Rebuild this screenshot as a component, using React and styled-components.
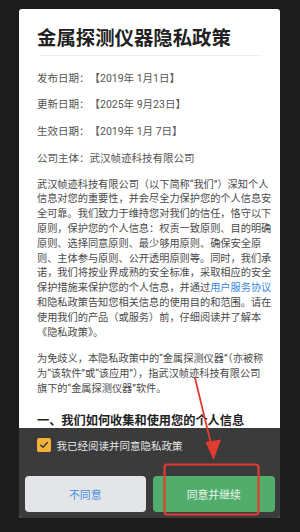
import React from "react";
import styled, { createGlobalStyle } from "styled-components";

const Global = createGlobalStyle`
  html, body { margin: 0; padding: 0; background: #1c1c1c; }
  body { font-family: Roboto, "Noto Sans CJK SC", sans-serif; }
`;

const Page = styled.div`
  position: relative;
  width: 300px;
  height: 532px;
  background: #1c1c1c;
  padding: 9px 20px 0 19px;
  box-sizing: border-box;
  overflow: hidden;
`;

const Card = styled.div`
  width: 261px;
  height: 509px;
  background: #ffffff;
  border-radius: 3px;
  display: flex;
  flex-direction: column;
  overflow: hidden;
`;

const Content = styled.div`
  flex: 1;
  min-height: 0;
  overflow: hidden;
  padding: 16.5px 18px 0 18px;
  color: #4a4a4a;
  font-size: 10.2px;
  line-height: 14.8px;
`;

const Title = styled.h1`
  margin: 0;
  font-size: 19.4px;
  line-height: 26px;
  font-weight: 700;
  color: #222;
  letter-spacing: 0;
`;

const Divider = styled.div`
  height: 1px;
  background: #eeeeee;
  margin: 3.5px 0 14.5px 2px;
`;

const Meta = styled.p`
  margin: 0 0 11.7px 0;
  font-size: 10.5px;
  line-height: 15px;
  color: #555;
  white-space: nowrap;
  text-spacing-trim: space-all;
`;

const Para = styled.p`
  margin: 12px 0 0 0;
  white-space: nowrap;
`;

const Link = styled.span`
  color: #3a86e0;
`;

const Heading = styled.h2`
  margin: 16.5px 0 0 0;
  font-size: 12.2px;
  line-height: 16px;
  font-weight: 700;
  color: #222;
  white-space: nowrap;
`;

const Footer = styled.div`
  flex: 0 0 90px;
  background: #3b3b3b;
  padding: 10px 5.5px 6px;
  box-sizing: border-box;
  display: flex;
  flex-direction: column;
`;

const CheckRow = styled.label`
  display: flex;
  align-items: center;
  gap: 6px;
  margin-left: 12.5px;
  height: 14px;
  color: #e6e6e6;
  font-size: 10.5px;
`;

const Box = styled.span`
  width: 13.5px;
  height: 13.5px;
  border-radius: 2px;
  background: #f1b13b;
  display: flex;
  align-items: center;
  justify-content: center;
`;

const Buttons = styled.div`
  margin-top: 24px;
  display: grid;
  grid-template-columns: 1fr 1fr;
  gap: 7px;
`;

const Btn = styled.button`
  height: 36px;
  border: none;
  border-radius: 4px;
  font-family: inherit;
  font-size: 10.8px;
  background: ${(p) => (p.$primary ? "#52ad6c" : "#e4e5e8")};
  color: ${(p) => (p.$primary ? "#e9f5ec" : "#4a8fe0")};
  padding: 0;
`;

const Overlay = styled.svg`
  position: absolute;
  left: 0;
  top: 0;
  pointer-events: none;
`;

export default function App() {
  return (
    <Page>
      <Global />
      <Card>
        <Content>
          <Title>金属探测仪器隐私政策</Title>
          <Divider />
          <Meta>发布日期：【2019年 1月1日】</Meta>
          <Meta>更新日期：【2025年 9月23日】</Meta>
          <Meta>生效日期：【2019年 1月 7日】</Meta>
          <Meta>公司主体：武汉帧迹科技有限公司</Meta>
          <Para>
            武汉帧迹科技有限公司（以下简称“我们”）深知个人<br />
            信息对您的重要性，并会尽全力保护您的个人信息安<br />
            全可靠。我们致力于维持您对我们的信任，恪守以下<br />
            原则，保护您的个人信息：权责一致原则、目的明确<br />
            原则、选择同意原则、最少够用原则、确保安全原<br />
            则、主体参与原则、公开透明原则等。同时，我们承<br />
            诺，我们将按业界成熟的安全标准，采取相应的安全<br />
            保护措施来保护您的个人信息，并通过<Link>用户服务协议</Link><br />
            和隐私政策告知您相关信息的使用目的和范围。请在<br />
            使用我们的产品（或服务）前，仔细阅读并了解本<br />
            《隐私政策》。
          </Para>
          <Para>
            为免歧义，本隐私政策中的“金属探测仪器”（亦被称<br />
            为“该软件”或“该应用”），指武汉帧迹科技有限公司<br />
            旗下的“金属探测仪器”软件。
          </Para>
          <Heading>一、我们如何收集和使用您的个人信息</Heading>
        </Content>
        <Footer>
          <CheckRow>
            <Box>
              <svg width="10" height="10" viewBox="0 0 10 10">
                <path d="M1.8 5.2 L4 7.3 L8.3 2.6" fill="none" stroke="#3a3a3a" strokeWidth="1.5" strokeLinecap="round" strokeLinejoin="round" />
              </svg>
            </Box>
            我已经阅读并同意隐私政策
          </CheckRow>
          <Buttons>
            <Btn>不同意</Btn>
            <Btn $primary>同意并继续</Btn>
          </Buttons>
        </Footer>
      </Card>
      <Overlay width="300" height="532" viewBox="0 0 300 532">
        <rect x="164.5" y="464.5" width="94" height="50" rx="3" fill="none" stroke="#e23b30" strokeWidth="2.2" />
        <line x1="195" y1="378" x2="211.5" y2="446" stroke="#e23b30" strokeWidth="1.8" strokeLinecap="round" />
        <polygon points="205.5,442 221,439.5 213.5,460" fill="#e23b30" />
      </Overlay>
    </Page>
  );
}
